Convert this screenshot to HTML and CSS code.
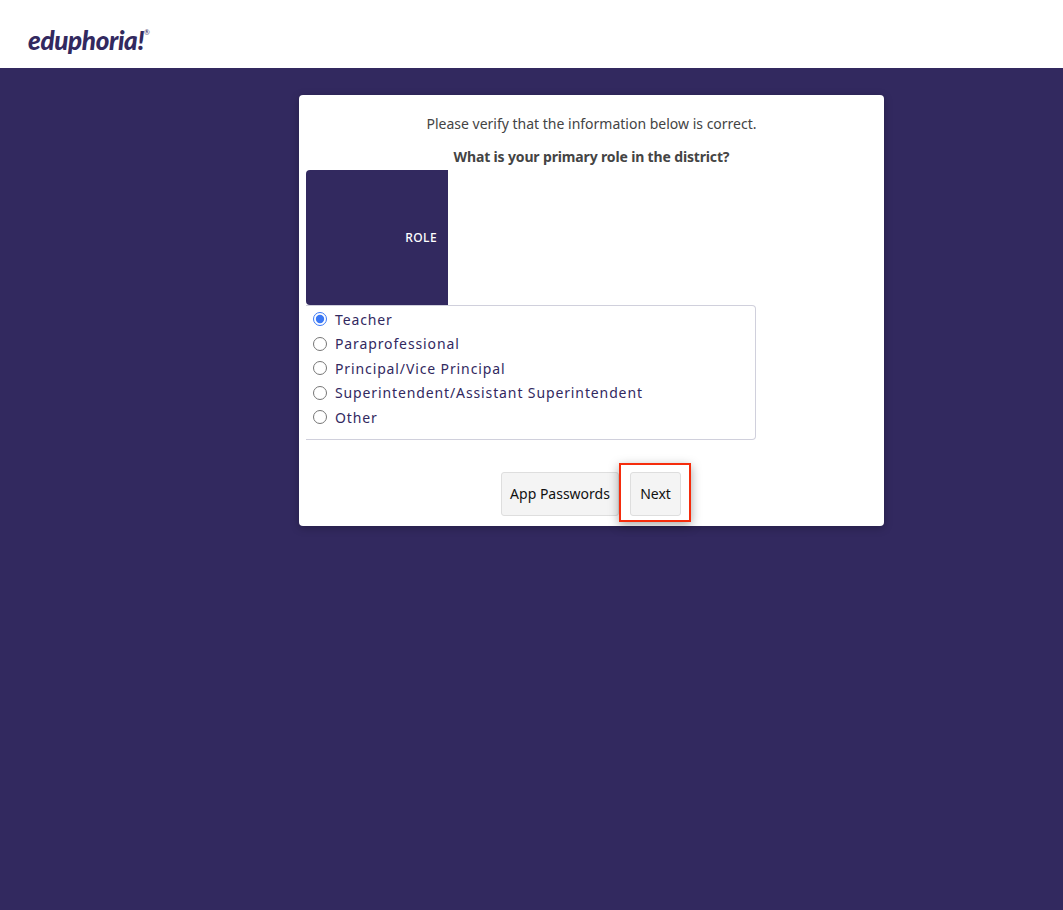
FILE: index.html
```html
<!DOCTYPE html>
<html lang="en">
<head>
    <meta charset="UTF-8">
    <meta name="viewport" content="width=device-width, initial-scale=1.0">
    <title>Eduphoria</title>
    <link rel="stylesheet" href="styles.css">
</head>
<body>
    <header class="topbar">
        <span class="logo">eduphoria!<sup class="logo-mark">®</sup></span>
    </header>
    <main class="page">
        <section class="card">
            <p class="intro">Please verify that the information below is correct.</p>
            <p class="question">What is your primary role in the district?</p>
            <div class="role-group">
                <div class="role-label">ROLE</div>
                <div class="role-list">
                    <label class="role-option"><input type="radio" name="role" checked>Teacher</label>
                    <label class="role-option"><input type="radio" name="role">Paraprofessional</label>
                    <label class="role-option"><input type="radio" name="role">Principal/Vice Principal</label>
                    <label class="role-option"><input type="radio" name="role">Superintendent/Assistant Superintendent</label>
                    <label class="role-option"><input type="radio" name="role">Other</label>
                </div>
            </div>
            <div class="actions">
                <button class="btn btn-side">App Passwords</button>
                <div class="highlight">
                    <button class="btn btn-next">Next</button>
                </div>
            </div>
        </section>
    </main>
</body>
</html>
```

FILE: styles.css
```css
:root {
    --purple: #32295f;
    --text-color: #444;
    --line: #d0d0dc;
}

* {
    box-sizing: border-box;
}

body {
    margin: 0;
    min-height: 100vh;
    background-color: var(--purple);
    color: var(--text-color);
    font-family: "Noto Sans", sans-serif;
    font-size: 14px;
}

/* Header */
.topbar {
    height: 68px;
    background-color: #fff;
    padding: 24px 0 0 28px;
}

.logo {
    display: inline-block;
    font-family: Lato, sans-serif;
    font-size: 26px;
    line-height: 32px;
    font-weight: 900;
    font-style: italic;
    letter-spacing: -0.35px;
    color: var(--purple);
}

.logo-mark {
    font-size: 7px;
    font-weight: 400;
    font-style: normal;
    vertical-align: 15px;
    line-height: 0;
}

/* Card */
.page {
    padding: 27px 179px 0 299px;
}

.card {
    width: 585px;
    height: 431px;
    padding: 19px 7px 0;
    background-color: #fff;
    border-radius: 4px;
    box-shadow: 0 2px 8px rgba(0, 0, 0, 0.25);
}

.intro,
.question {
    margin: 0;
    text-align: center;
    line-height: 20px;
}

.question {
    margin-top: 13px;
    font-weight: 700;
    letter-spacing: -0.15px;
    height: 23px;
}

/* Role picker */
.role-group {
    width: 450px;
}

.role-label {
    display: flex;
    align-items: center;
    justify-content: flex-end;
    width: 142px;
    height: 135px;
    padding-right: 11px;
    background-color: var(--purple);
    border-radius: 4px 0 0 4px;
    color: #fff;
    font-size: 12px;
    font-weight: 500;
    letter-spacing: 0.4px;
}

.role-list {
    height: 135px;
    padding-top: 1px;
    border: 1px solid var(--line);
    border-left: none;
    border-radius: 0 4px 4px 0;
}

.role-option {
    display: flex;
    align-items: center;
    height: 24.5px;
    color: var(--purple);
    letter-spacing: 0.88px;
}

.role-option input {
    width: 14px;
    height: 14px;
    margin: 0 8px 0 7px;
    accent-color: #3b78f5;
}

/* Buttons */
.actions {
    display: flex;
    align-items: flex-end;
    justify-content: center;
    margin: 23px 0 0 9px;
}

.btn {
    height: 44px;
    padding: 0 0 2px;
    background-color: #f4f4f4;
    border: 1px solid #dedede;
    border-radius: 3px;
    color: #111;
    font-family: inherit;
    font-size: 14px;
}

.btn-side {
    width: 118px;
    margin-bottom: 6px;
}

.btn-next {
    width: 51px;
}

.highlight {
    padding: 7px 8px 4px 9px;
    border: 2px solid #f52c0c;
    box-shadow: 0 3px 10px rgba(0, 0, 0, 0.35);
}
```
